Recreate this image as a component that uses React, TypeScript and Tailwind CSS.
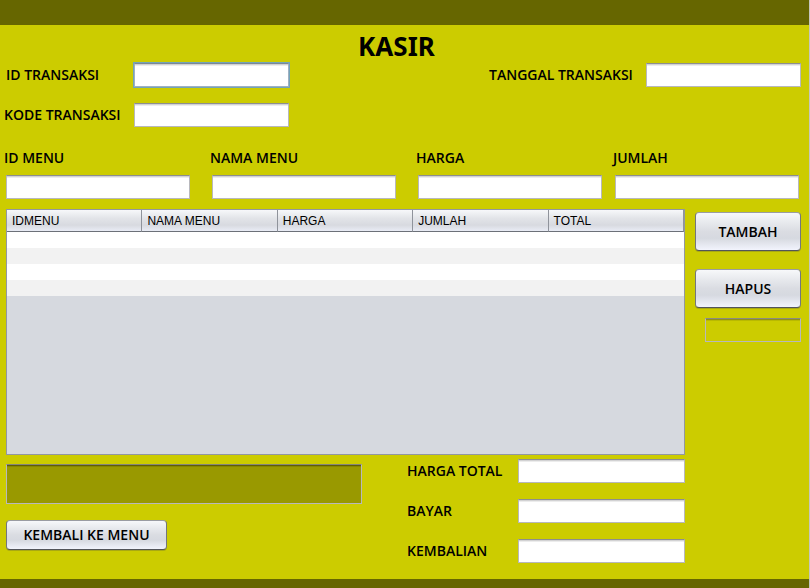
import React from "react";
import clsx from "clsx";

const fieldBase =
  "block h-6 w-full min-w-0 rounded-none border bg-white px-1.5 text-xs text-black shadow-[inset_0_1px_0_#d2d2d3,inset_0_2px_0_#ececec]";

const field = clsx(fieldBase, "border-[#b8b8bd] border-t-[#8d8e8f] outline-none");

const activeField = clsx(
  fieldBase,
  "border-[#9fb0c2] border-t-[#7d8894] outline-1 outline-solid outline-[#73a4b8]"
);

const caption = "text-sm leading-5 font-semibold whitespace-nowrap";

const silver =
  "rounded-[4px] border border-[#74767c] border-t-[#9a9ca2] border-b-[#53555b] bg-[linear-gradient(to_bottom,#f7f8fa_0%,#e6e8ec_28%,#dadce2_50%,#d6d9e0_68%,#f2f4fd_100%)] text-sm font-semibold whitespace-nowrap shadow-[0_1px_0_#a9a912]";

const menuFields = [
  { id: "id-menu", label: "ID MENU", pad: "pr-5" },
  { id: "nama-menu", label: "NAMA MENU", pad: "pr-5" },
  { id: "harga", label: "HARGA", pad: "pr-[11px]" },
  { id: "jumlah", label: "JUMLAH", pad: "" },
];

const totals = [
  { id: "harga-total", label: "HARGA TOTAL" },
  { id: "bayar", label: "BAYAR" },
  { id: "kembalian", label: "KEMBALIAN" },
];

const columns = ["IDMENU", "NAMA MENU", "HARGA", "JUMLAH", "TOTAL"];
const emptyRows = [0, 1, 2, 3];

function TransactionFields() {
  return (
    <div className="flex items-start justify-between pr-2 pl-1">
      <div className="grid grid-cols-[130px_155px] items-center gap-y-4">
        <label htmlFor="id-transaksi" className={clsx(caption, "pl-0.5")}>
          ID TRANSAKSI
        </label>
        <input id="id-transaksi" className={activeField} />
        <label htmlFor="kode-transaksi" className={caption}>
          KODE TRANSAKSI
        </label>
        <input id="kode-transaksi" className={field} />
      </div>
      <div className="grid grid-cols-[157px_155px] items-center">
        <label htmlFor="tanggal-transaksi" className={caption}>
          TANGGAL TRANSAKSI
        </label>
        <input id="tanggal-transaksi" className={field} />
      </div>
    </div>
  );
}

function MenuFields() {
  return (
    <div className="grid grid-cols-[206fr_206fr_197fr_186fr] pr-2.5 pl-1">
      {menuFields.map((f) => (
        <div key={f.id} className={clsx("flex flex-col gap-[7px]", f.pad)}>
          <label htmlFor={f.id} className={caption}>
            {f.label}
          </label>
          <div className="pl-0.5">
            <input id={f.id} className={field} />
          </div>
        </div>
      ))}
    </div>
  );
}

function OrderTable() {
  return (
    <div className="min-h-[246px] flex-1 border border-[#9297a1] bg-[#d6d9df]">
      <table className="w-full table-fixed border-separate border-spacing-0 text-left font-['Liberation_Sans',Arial,sans-serif] text-xs">
        <thead>
          <tr>
            {columns.map((c) => (
              <th
                key={c}
                scope="col"
                className="h-[22px] border-r border-b border-r-[#8f939b] border-b-[#6c7078] bg-[linear-gradient(to_bottom,#f7f8fa_0%,#e2e4e8_40%,#d8dae0_72%,#e9ecf5_100%)] px-[5px] py-0 font-normal"
              >
                {c}
              </th>
            ))}
          </tr>
        </thead>
        <tbody>
          {emptyRows.map((r) => (
            <tr key={r} className="bg-white even:bg-[#f2f2f2]">
              {columns.map((c) => (
                <td key={c} className="h-4 p-0" />
              ))}
            </tr>
          ))}
        </tbody>
      </table>
    </div>
  );
}

function Footer() {
  return (
    <div className="flex items-start justify-between">
      <div className="flex w-[356px] flex-col items-start gap-4 pt-[5px]">
        <output
          aria-label="Pesan"
          className="block h-10 w-full border border-[#b8b8bd] border-t-[#85857c] bg-[#999900] shadow-[inset_0_1px_0_#5e5e08,inset_0_2px_0_#878700]"
        />
        <button type="button" className={clsx(silver, "h-[30px] w-[161px]")}>
          KEMBALI KE MENU
        </button>
      </div>
      <div className="grid grid-cols-[111px_167px] items-center gap-y-4">
        {totals.map((t) => (
          <React.Fragment key={t.id}>
            <label htmlFor={t.id} className={caption}>
              {t.label}
            </label>
            <input id={t.id} className={field} />
          </React.Fragment>
        ))}
      </div>
    </div>
  );
}

export default function App() {
  return (
    <div className="flex min-h-screen flex-col border-r border-[#c6c6bd] bg-[#cccc00] font-['Open_Sans','Noto_Sans',sans-serif] text-black">
      <header className="h-[25px] bg-[#666600]" />
      <main className="flex flex-1 flex-col">
        <h1 className="h-[38px] pt-[5px] pr-4 text-center font-['Noto_Sans',sans-serif] text-[26px] leading-8 font-bold">
          KASIR
        </h1>
        <TransactionFields />
        <div className="pt-[21px]">
          <MenuFields />
        </div>
        <div className="flex flex-1 gap-2.5 pt-2.5 pr-2 pb-4 pl-1.5">
          <div className="flex min-w-0 flex-1 flex-col gap-1">
            <OrderTable />
            <Footer />
          </div>
          <div className="flex w-[106px] flex-col pt-[3px]">
            <button type="button" className={clsx(silver, "h-[39px]")}>
              TAMBAH
            </button>
            <button type="button" className={clsx(silver, "mt-[18px] h-[39px]")}>
              HAPUS
            </button>
            <input
              aria-label="ID terpilih"
              disabled
              className="mt-2.5 ml-2.5 h-6 w-24 border border-[#b8b8bd] border-t-[#8b8b7e] bg-transparent px-1.5 text-xs shadow-[inset_0_1px_0_#8e8e20,inset_0_2px_0_#b9b900]"
            />
          </div>
        </div>
      </main>
      <footer className="h-[9px] bg-[#666600]" />
    </div>
  );
}
